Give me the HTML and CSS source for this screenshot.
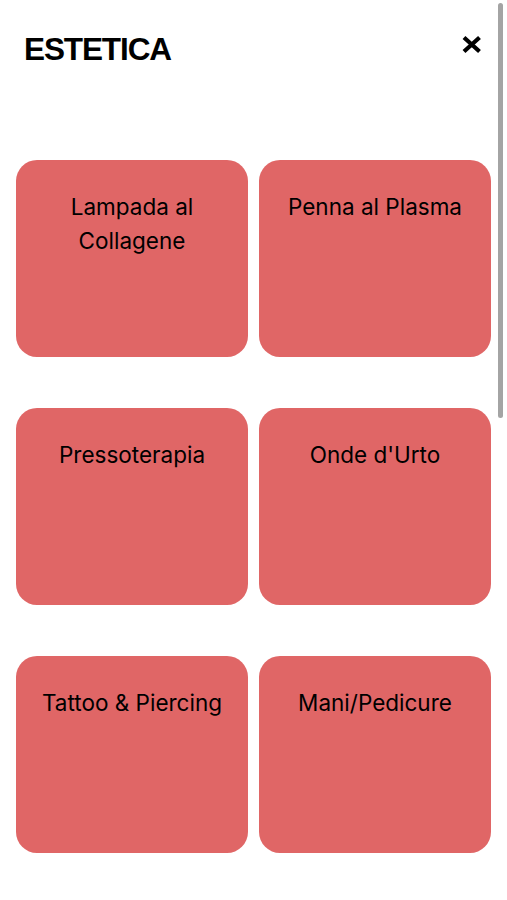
FILE: index.html
```html
<!DOCTYPE html>
<html lang="it">
<head>
<meta charset="utf-8">
<title>Estetica</title>
<link rel="stylesheet" href="styles.css">
</head>
<body>
<div class="page">
  <header class="header">
    <h1 class="title">ESTETICA</h1>
    <button class="close" aria-label="Chiudi">
      <svg width="22" height="19" viewBox="0 0 22 19" aria-hidden="true">
        <path d="M3 2.5 L18.5 16.5 M18.5 2.5 L3 16.5" stroke="#000" stroke-width="4.2" stroke-linecap="butt" fill="none"/>
      </svg>
    </button>
  </header>
  <main class="grid">
    <div class="card">Lampada al Collagene</div>
    <div class="card">Penna al Plasma</div>
    <div class="card">Pressoterapia</div>
    <div class="card">Onde d'Urto</div>
    <div class="card">Tattoo &amp; Piercing</div>
    <div class="card">Mani/Pedicure</div>
  </main>
</div>
<div class="scroll-thumb"></div>
</body>
</html>
```
FILE: styles.css
```css
html, body {
  margin: 0;
  padding: 0;
  background: #ffffff;
}

body {
  font-family: "Inter", "Liberation Sans", Arial, sans-serif;
  color: #000;
}

.page {
  width: 507px;
}

.header {
  box-sizing: border-box;
  height: 66px;
  padding: 34px 24px 0 24px;
  display: flex;
  justify-content: space-between;
  align-items: flex-start;
}

.title {
  margin: 0;
  font-family: "Liberation Sans", Arial, sans-serif;
  font-weight: 700;
  font-size: 31.5px;
  line-height: 31px;
  letter-spacing: -1.1px;
  color: #000;
}

.close {
  margin: 0;
  padding: 0;
  border: 0;
  background: none;
  width: 22px;
  height: 19px;
  margin-top: 1px;
  display: block;
  cursor: pointer;
}

.close svg {
  display: block;
}

.grid {
  margin-top: 94px;
  padding: 0 16px;
  display: grid;
  grid-template-columns: 232px 232px;
  column-gap: 11px;
  row-gap: 51px;
}

.card {
  box-sizing: border-box;
  height: 197px;
  background: #e06666;
  border-radius: 21px;
  padding: 30px 12px 0;
  text-align: center;
  font-size: 22.5px;
  line-height: 34px;
  color: #000;
}

.scroll-thumb {
  position: fixed;
  top: 3px;
  left: 498px;
  width: 5px;
  height: 415px;
  border-radius: 3px;
  background: #a4a4a4;
}
```
